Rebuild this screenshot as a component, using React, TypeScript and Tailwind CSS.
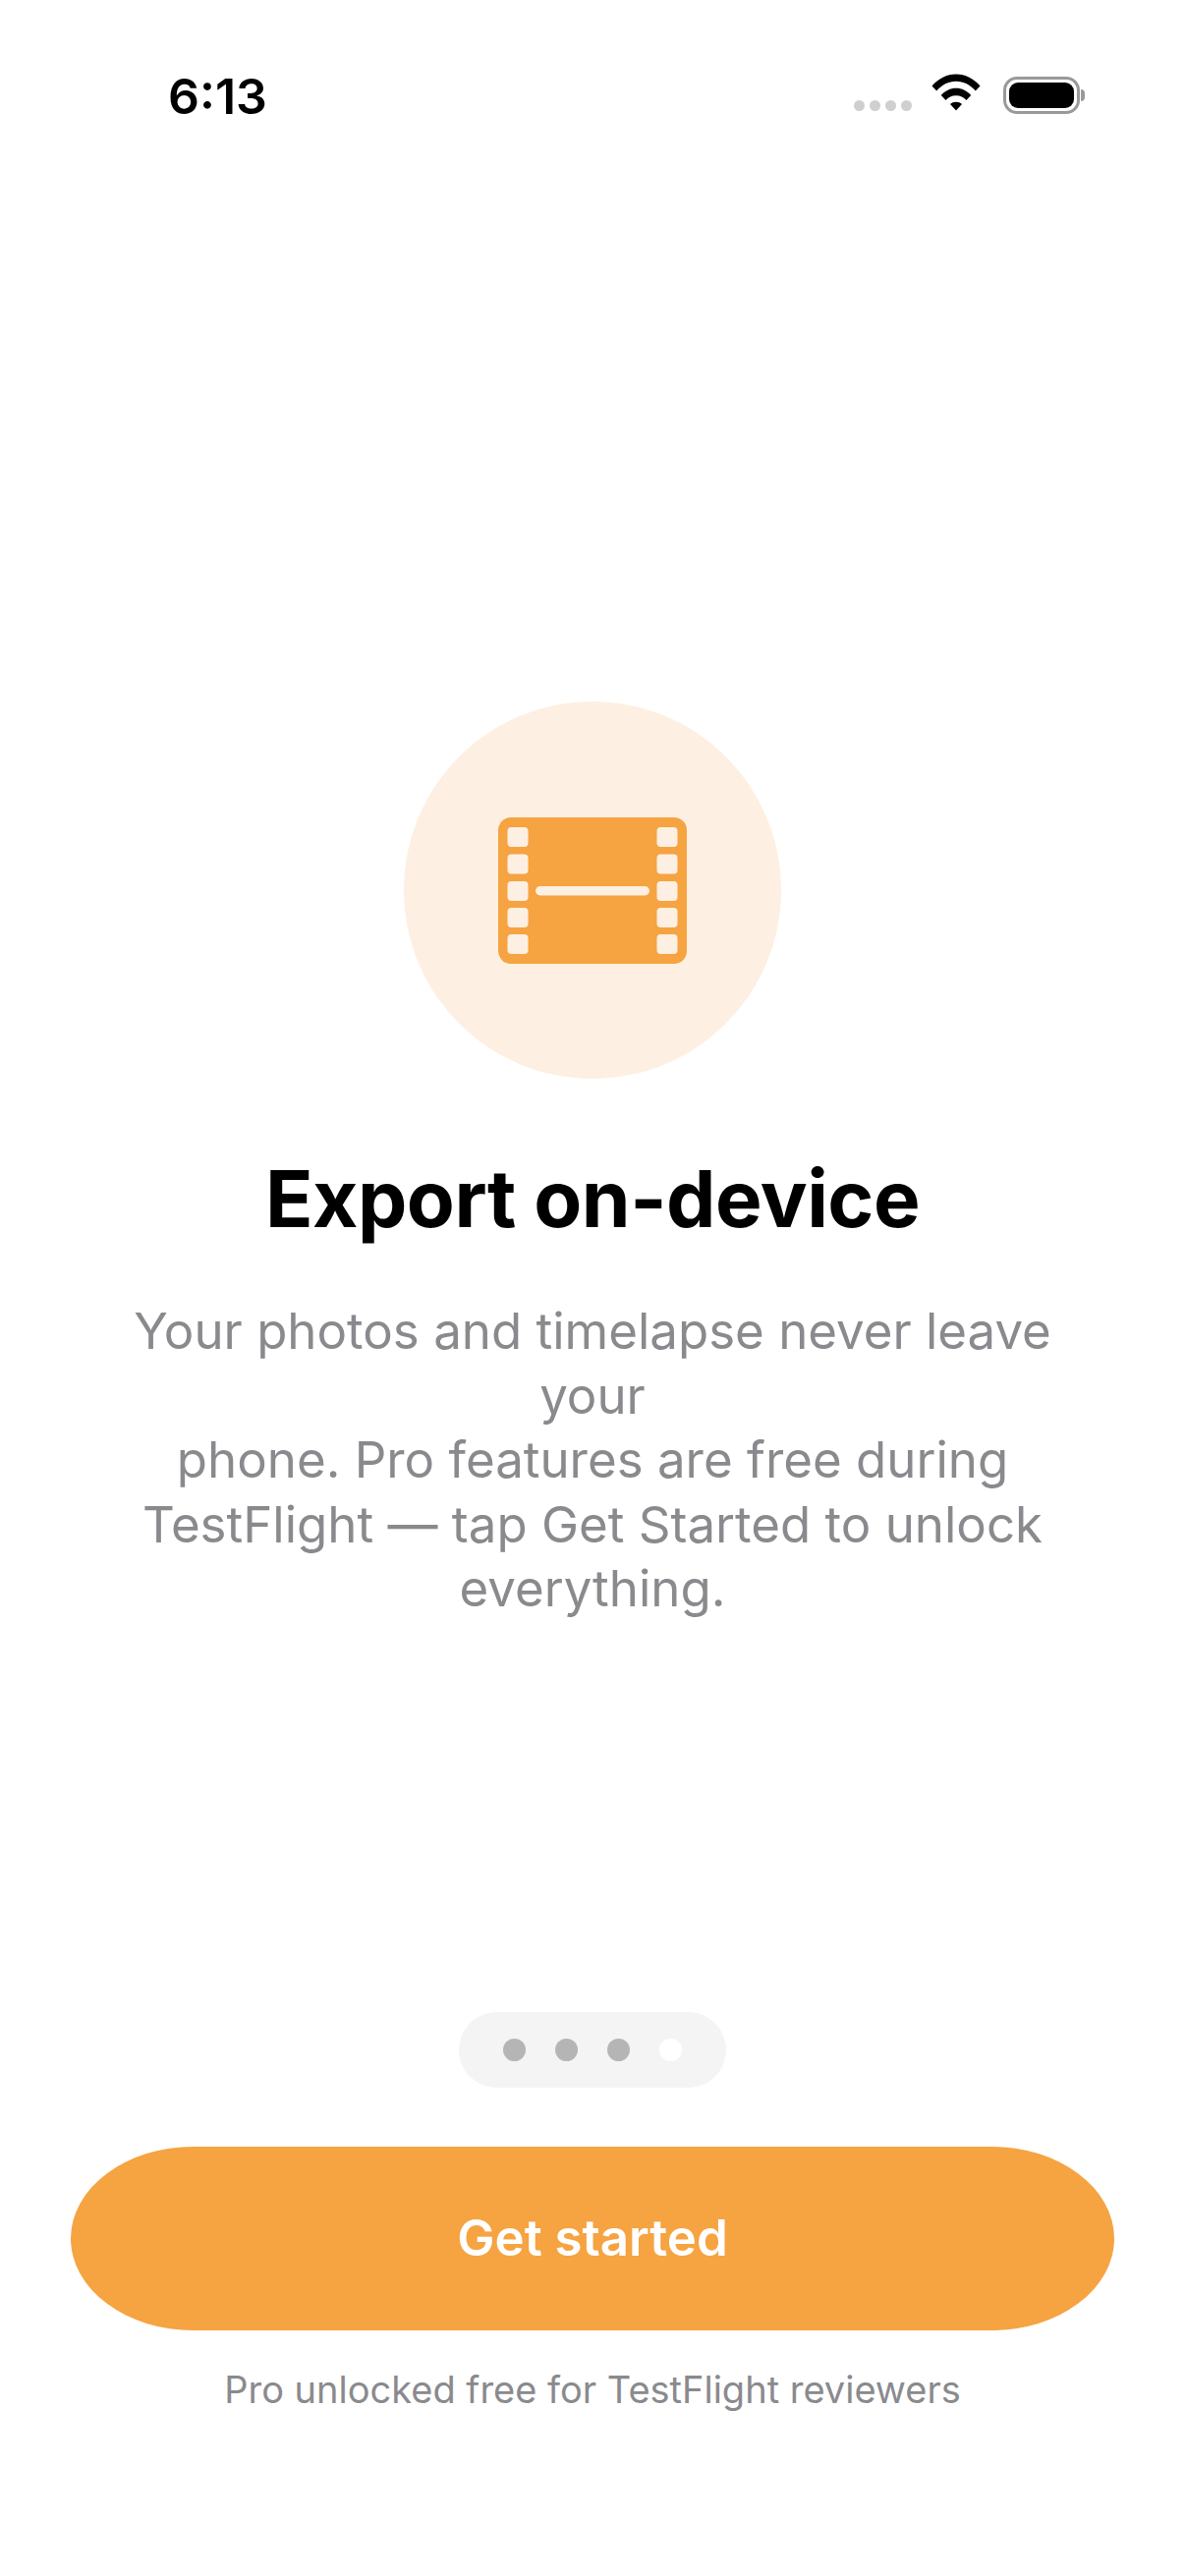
import React from "react";

const FilmIcon = () => {
  const rows = [842, 869.5, 897, 924, 951];
  return (
    <svg width="192" height="149" viewBox="507 832 192 149" className="block">
      <rect x="507" y="832" width="192" height="149" rx="13" fill="#F6A341" />
      {rows.map((y) => (
        <React.Fragment key={y}>
          <rect x="516.5" y={y} width="21" height="20" rx="4" fill="#FDF0E2" />
          <rect x="668.5" y={y} width="21" height="20" rx="4" fill="#FDF0E2" />
        </React.Fragment>
      ))}
      <rect x="545" y="902" width="116" height="9.5" rx="4.75" fill="#FDF0E2" />
    </svg>
  );
};

const WifiIcon = () => (
  <svg width="50" height="38" viewBox="0 0 50 38" className="block">
    <path
      d="M0.5 12.5 C7 5 15.500 0.500 25 0.500 C34.500 0.500 43 5 49.500 12.500 L44.800 17.500 C39.500 11.500 32.800 7.800 25 7.800 C17.200 7.800 10.500 11.500 5.200 17.500 Z"
      fill="#000"
    />
    <path
      d="M9.800 22 C13.800 17.500 19 14.800 25 14.800 C31 14.800 36.200 17.500 40.200 22 L35.500 27 C32.800 24 29.300 22.200 25 22.200 C20.700 22.200 17.200 24 14.500 27 Z"
      fill="#000"
    />
    <path d="M19 31 C20.600 29.600 22.700 28.800 25 28.800 C27.300 28.800 29.400 29.600 31 31 L25 37.500 Z" fill="#000" />
  </svg>
);

const StatusBar = () => (
  <div className="flex items-start justify-between h-[130px] pl-[171px] pr-[107px] pt-[68px]">
    <span className="text-[50px] leading-[60px] font-semibold text-black">6:13</span>
    <div className="flex items-start pt-[10px]">
      <div className="flex gap-[5px] mt-[24px]">
        <div className="w-[11px] h-[11px] rounded-full bg-[#cfcfcf]" />
        <div className="w-[11px] h-[11px] rounded-full bg-[#cfcfcf]" />
        <div className="w-[11px] h-[11px] rounded-full bg-[#cfcfcf]" />
        <div className="w-[11px] h-[11px] rounded-full bg-[#cfcfcf]" />
      </div>
      <div className="ml-[20px] -mt-[3px]">
        <WifiIcon />
      </div>
      <div className="ml-[23px] relative w-[78px] h-[38px] rounded-[14px] border-[3px] border-[#999] p-[3px]">
        <div className="w-full h-full rounded-[9px] bg-black" />
        <div className="absolute -right-[8px] top-[10px] w-[4px] h-[12px] rounded-r-full bg-[#999]" />
      </div>
    </div>
  </div>
);

const App = () => {
  return (
    <div className="w-[1206px] h-[2622px] bg-white flex flex-col font-['Inter',sans-serif]">
      <StatusBar />

      <div className="flex flex-col items-center mt-[584px]">
        <div className="w-[384px] h-[384px] rounded-full bg-[#FDF0E2] flex items-center justify-center">
          <FilmIcon />
        </div>
        <h1 className="mt-[72px] text-[80px] leading-[100px] font-bold text-black tracking-[-0.5px]">
          Export on-device
        </h1>
        <p className="mt-[52px] w-[1040px] text-center text-[51px] leading-[65.5px] text-[#8A8A8E] font-normal">
          Your photos and timelapse never leave your
          <br />
          phone. Pro features are free during
          <br />
          TestFlight — tap Get Started to unlock
          <br />
          everything.
        </p>
      </div>

      <div className="mt-auto flex flex-col items-center pb-[165px]">
        <div className="flex items-center justify-center gap-[30px] w-[272px] h-[77px] rounded-full bg-[#F4F4F4]">
          <div className="w-[23px] h-[23px] rounded-full bg-[#B5B5B5]" />
          <div className="w-[23px] h-[23px] rounded-full bg-[#B5B5B5]" />
          <div className="w-[23px] h-[23px] rounded-full bg-[#B5B5B5]" />
          <div className="w-[23px] h-[23px] rounded-full bg-white" />
        </div>
        <button className="mt-[60px] w-[1062px] h-[187px] rounded-[125px/93.5px] bg-[#F6A341] text-white text-[51px] font-semibold">
          Get started
        </button>
        <p className="mt-[35px] text-[38px] leading-[50px] text-[#8A8A8E]">Pro unlocked free for TestFlight reviewers</p>
      </div>
    </div>
  );
};

export default App;
